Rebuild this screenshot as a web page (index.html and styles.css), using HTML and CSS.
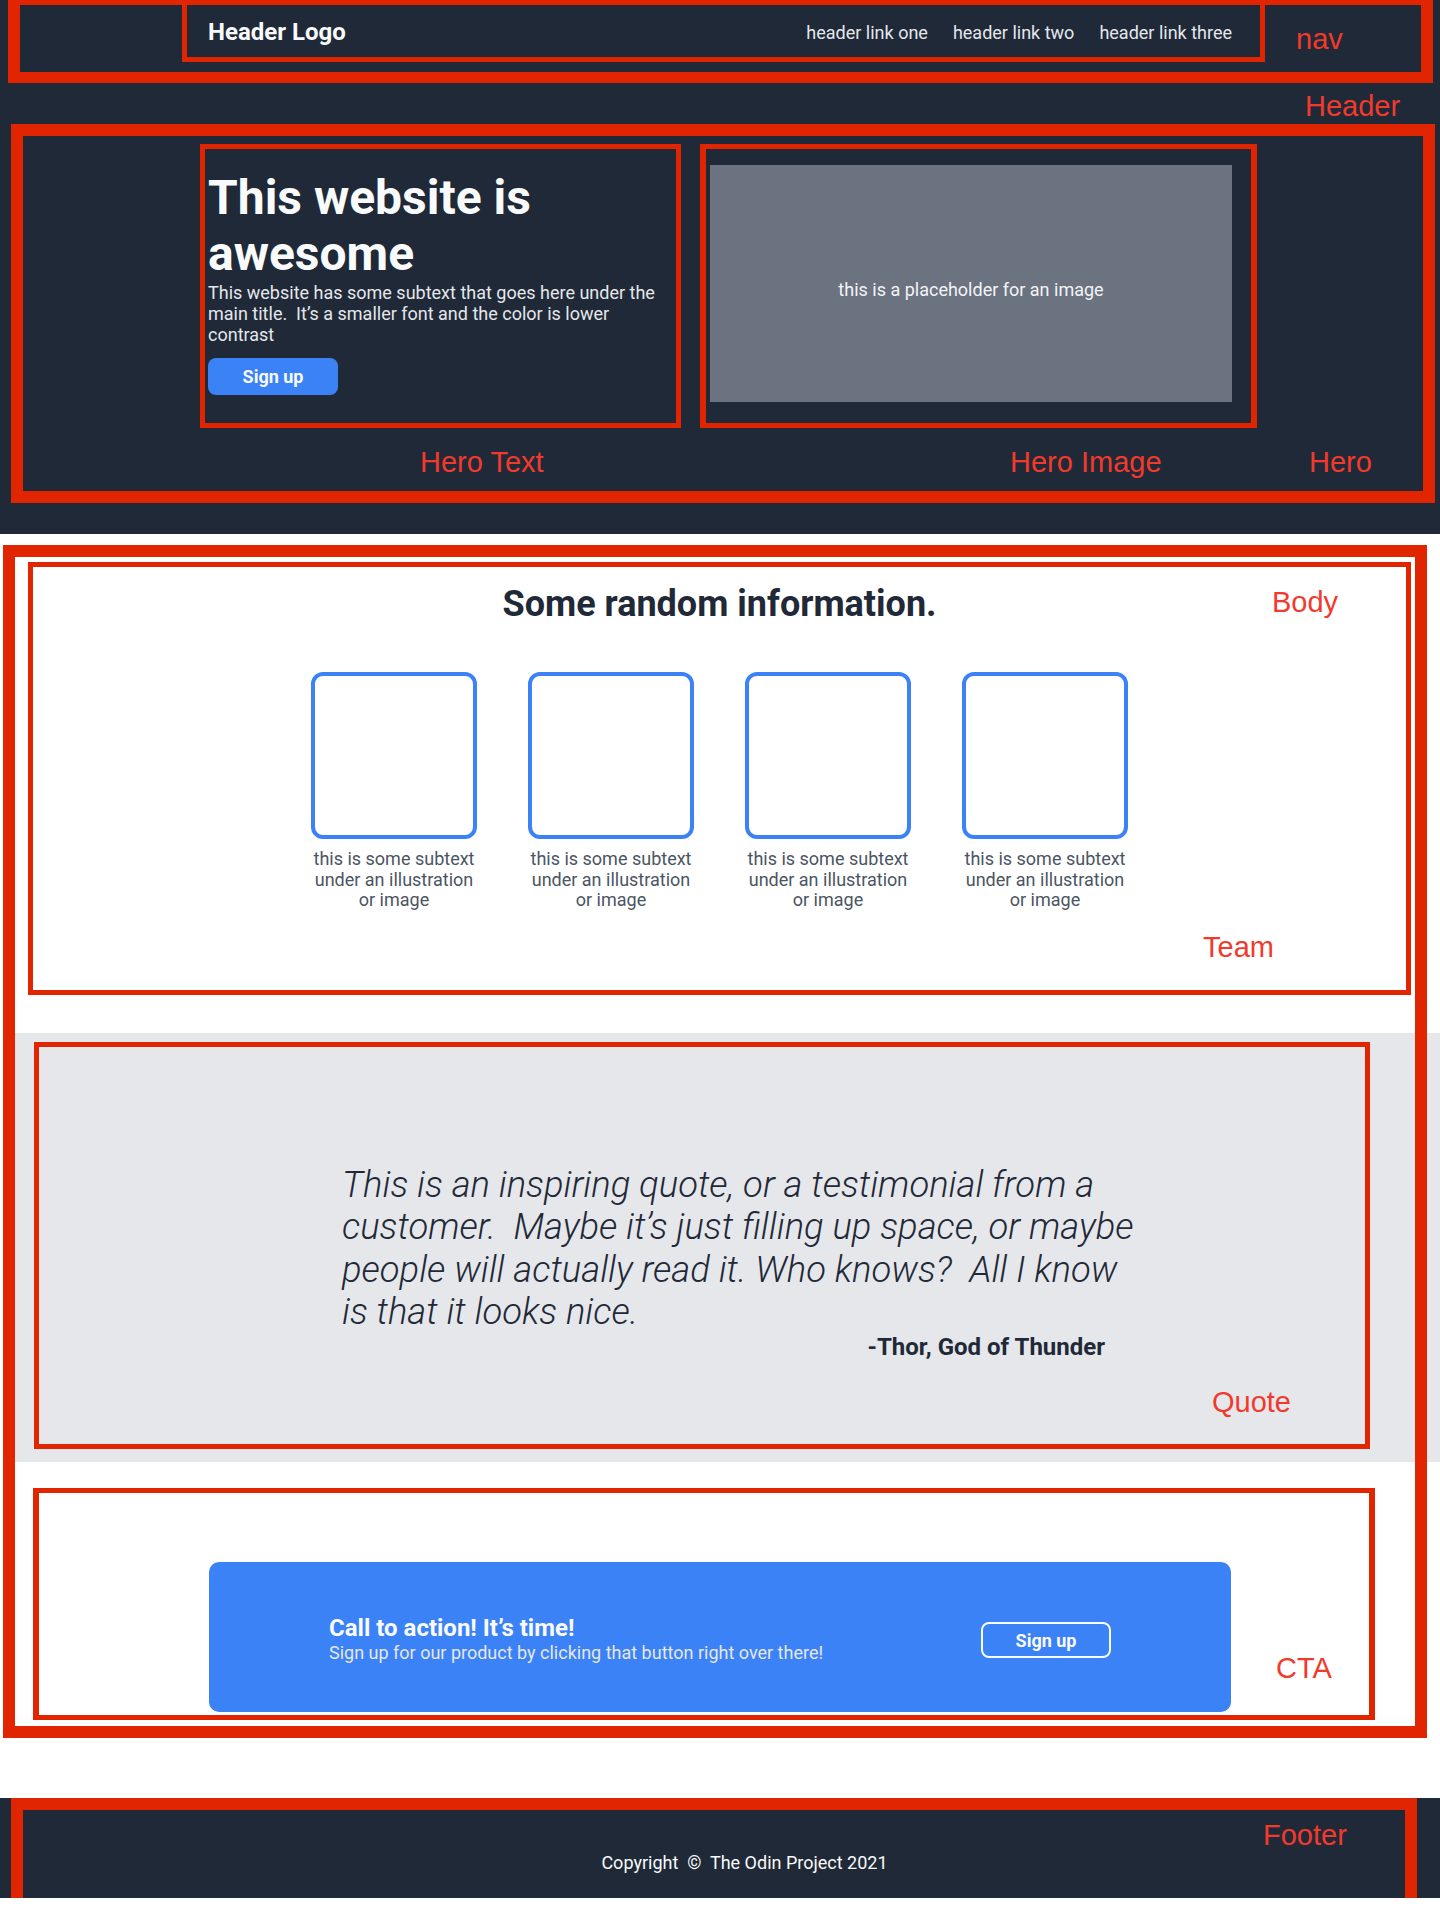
FILE: index.html
```html
<!DOCTYPE html>
<html lang="en">
<head>
    <meta charset="UTF-8">
    <meta name="viewport" content="width=device-width, initial-scale=1.0">
    <title>Landing Page Layout</title>
    <link rel="stylesheet" href="styles.css">
</head>
<body>
    <header class="site-header">
        <div class="mark nav-mark">
            <nav class="mark navbar">
                <div class="logo">Header Logo</div>
                <ul class="nav-links">
                    <li><a href="#">header link one</a></li>
                    <li><a href="#">header link two</a></li>
                    <li><a href="#">header link three</a></li>
                </ul>
            </nav>
            <span class="label nav-label">nav</span>
        </div>
        <div class="header-label-row">
            <span class="label">Header</span>
        </div>
        <section class="mark hero">
            <div class="mark hero-text">
                <h1>This website is awesome</h1>
                <p>This website has some subtext that goes here under the main title.&nbsp; It’s a smaller font and the color is lower contrast</p>
                <button class="btn-primary">Sign up</button>
            </div>
            <div class="mark hero-image">
                <div class="placeholder">this is a placeholder for an image</div>
            </div>
            <span class="label hero-text-label">Hero Text</span>
            <span class="label hero-image-label">Hero Image</span>
            <span class="label hero-label">Hero</span>
        </section>
    </header>

    <main class="body-mark">
        <section class="mark team">
            <h2>Some random information.</h2>
            <div class="cards">
                <div class="card">
                    <div class="card-img"></div>
                    <p>this is some subtext<br>under an illustration<br>or image</p>
                </div>
                <div class="card">
                    <div class="card-img"></div>
                    <p>this is some subtext<br>under an illustration<br>or image</p>
                </div>
                <div class="card">
                    <div class="card-img"></div>
                    <p>this is some subtext<br>under an illustration<br>or image</p>
                </div>
                <div class="card">
                    <div class="card-img"></div>
                    <p>this is some subtext<br>under an illustration<br>or image</p>
                </div>
            </div>
            <span class="label body-label">Body</span>
            <span class="label team-label">Team</span>
        </section>

        <section class="quote-band">
            <div class="mark quote">
                <blockquote>
                    <p>This is an inspiring quote, or a testimonial from a<br>customer.&nbsp; Maybe it’s just filling up space, or maybe<br>people will actually read it. Who knows?&nbsp; All I know<br>is that it looks nice.</p>
                    <cite>-Thor, God of Thunder</cite>
                </blockquote>
                <span class="label quote-label">Quote</span>
            </div>
        </section>

        <section class="mark cta">
            <div class="cta-box">
                <div class="cta-text">
                    <h3>Call to action! It’s time!</h3>
                    <p>Sign up for our product by clicking that button right over there!</p>
                </div>
                <button class="btn-outline">Sign up</button>
            </div>
            <span class="label cta-label">CTA</span>
        </section>
    </main>

    <footer class="site-footer">
        <div class="mark footer-mark">
            <p>Copyright&nbsp; ©&nbsp; The Odin Project 2021</p>
            <span class="label footer-label">Footer</span>
        </div>
    </footer>
</body>
</html>
```

FILE: styles.css
```css
* {
    box-sizing: border-box;
}
body {
    margin: 0;
    font-family: Roboto, "Liberation Sans", sans-serif;
    background: #fff;
    color: #1f2937;
}
h1, h2, h3, p, ul {
    margin: 0;
}

/* annotation boxes and labels */
.mark {
    border: 5px solid #e12500;
    position: relative;
}
.label {
    font-family: "Liberation Sans", Arial, sans-serif;
    font-size: 29px;
    line-height: 30px;
    color: #f23a2c;
    position: absolute;
    white-space: nowrap;
}

/* header */
.site-header {
    background: #1f2937;
    height: 534px;
    overflow: hidden;
}
.nav-mark {
    display: flex;
    align-items: flex-start;
    width: 1425px;
    height: 83px;
    margin-left: 8px;
    border-width: 5px 12px 11px 12px;
}
.navbar {
    display: flex;
    align-items: center;
    justify-content: space-between;
    width: 1083px;
    height: 57px;
    margin-left: 162px;
    border-top: none;
    padding: 0 28px 0 21px;
}
.logo {
    color: #f9fafb;
    font-size: 24px;
    font-weight: 700;
    margin-top: 1px;
}
.nav-links {
    list-style: none;
    padding: 0;
    display: flex;
    gap: 25px;
    margin-top: 3px;
}
.nav-links a {
    color: #e5e7eb;
    text-decoration: none;
    font-size: 18px;
}
.nav-label {
    position: static;
    margin: 19px 0 0 31px;
}
.header-label-row {
    height: 41px;
    padding: 8px 0 0 1305px;
}
.header-label-row .label {
    position: static;
    display: inline-block;
}

/* hero */
.hero {
    display: flex;
    align-items: flex-start;
    gap: 19px;
    width: 1424px;
    height: 379px;
    margin-left: 11px;
    border-width: 12px;
    padding: 8px 0 0 177px;
}
.hero-text {
    width: 481px;
    height: 284px;
    padding: 21px 10px 0 3px;
}
.hero-text h1 {
    color: #f9fafb;
    font-size: 48px;
    font-weight: 700;
    line-height: 56px;
}
.hero-text p {
    color: #e5e7eb;
    font-size: 18px;
    line-height: 21px;
}
.btn-primary {
    margin-top: 13px;
    width: 130px;
    height: 37px;
    border: none;
    border-radius: 8px;
    background: #3b82f6;
    color: #f9fafb;
    font-family: Roboto, sans-serif;
    font-size: 18px;
    font-weight: 700;
}
.hero-image {
    width: 557px;
    height: 284px;
    border-width: 5px 6px;
    padding: 16px 0 0 4px;
}
.placeholder {
    width: 522px;
    height: 237px;
    padding-top: 12px;
    background: #6b7280;
    color: #f3f4f6;
    font-size: 18px;
    display: flex;
    align-items: center;
    justify-content: center;
}
.hero-text-label { left: 397px; top: 311px; }
.hero-image-label { left: 987px; top: 311px; }
.hero-label { left: 1286px; top: 311px; }

/* body */
.body-mark {
    display: block;
    position: relative;
    width: 1424px;
    height: 1193px;
    margin: 11px 0 0 3px;
    padding: 12px;
}
.body-mark::after {
    content: "";
    position: absolute;
    inset: 0;
    border: 12px solid #e12500;
    pointer-events: none;
    z-index: 2;
}

.team {
    height: 433px;
    margin: 5px 4px 0 13px;
    padding-top: 16px;
    text-align: center;
}
.team h2 {
    font-size: 36px;
    font-weight: 700;
    line-height: 42px;
    color: #1f2937;
}
.cards {
    display: flex;
    justify-content: center;
    gap: 51px;
    margin-top: 47px;
}
.card {
    width: 166px;
    display: flex;
    flex-direction: column;
    align-items: center;
}
.card-img {
    width: 166px;
    height: 167px;
    border: 4px solid #3b82f6;
    border-radius: 12px;
}
.card p {
    margin-top: 10px;
    color: #4b5563;
    font-size: 18px;
    line-height: 20.5px;
    white-space: nowrap;
}
.body-label { left: 1239px; top: 20px; }
.team-label { left: 1170px; top: 365px; }

/* quote */
.quote-band {
    background: #e5e7eb;
    height: 429px;
    margin: 38px -25px 0 0;
    padding: 9px 0 0 19px;
}
.quote {
    width: 1336px;
    height: 407px;
    padding: 117px 0 0 303px;
}
.quote blockquote {
    margin: 0;
    width: 810px;
}
.quote blockquote p {
    font-size: 36.4px;
    font-weight: 300;
    font-style: italic;
    line-height: 42.3px;
    color: #1f2937;
    white-space: nowrap;
}
.quote cite {
    display: block;
    text-align: right;
    padding-right: 47px;
    font-style: normal;
    font-weight: 700;
    font-size: 24px;
    line-height: 28px;
    color: #1f2937;
}
.quote-label { left: 1173px; top: 340px; }

/* call to action */
.cta {
    width: 1342px;
    height: 232px;
    margin: 26px 0 0 18px;
    border-width: 5px 6px;
    padding: 69px 0 0 170px;
}
.cta-box {
    width: 1022px;
    height: 150px;
    background: #3b82f6;
    border-radius: 10px;
    display: flex;
    align-items: center;
    justify-content: space-between;
    padding: 4px 120px 0 120px;
    color: #f9fafb;
}
.cta-text h3 {
    font-size: 24px;
    font-weight: 700;
    line-height: 28px;
}
.cta-text p {
    font-size: 18px;
    line-height: 22px;
    color: #e5e7eb;
}
.btn-outline {
    width: 130px;
    height: 36px;
    background: transparent;
    border: 2px solid #f9fafb;
    border-radius: 8px;
    color: #f9fafb;
    font-family: Roboto, sans-serif;
    font-size: 18px;
    font-weight: 700;
    margin-top: 2px;
}
.cta-label { left: 1237px; top: 160px; }

/* footer */
.site-footer {
    background: #1f2937;
    height: 100px;
    margin-top: 74px;
}
.footer-mark {
    width: 1406px;
    height: 114px;
    margin: -14px 0 0 11px;
    border-width: 12px 12px 8px 12px;
    padding: 42px 0 0 61px;
    text-align: center;
}
.footer-mark p {
    color: #f9fafb;
    font-size: 18px;
    line-height: 22px;
}
.footer-label { left: 1240px; top: 10px; }
```
